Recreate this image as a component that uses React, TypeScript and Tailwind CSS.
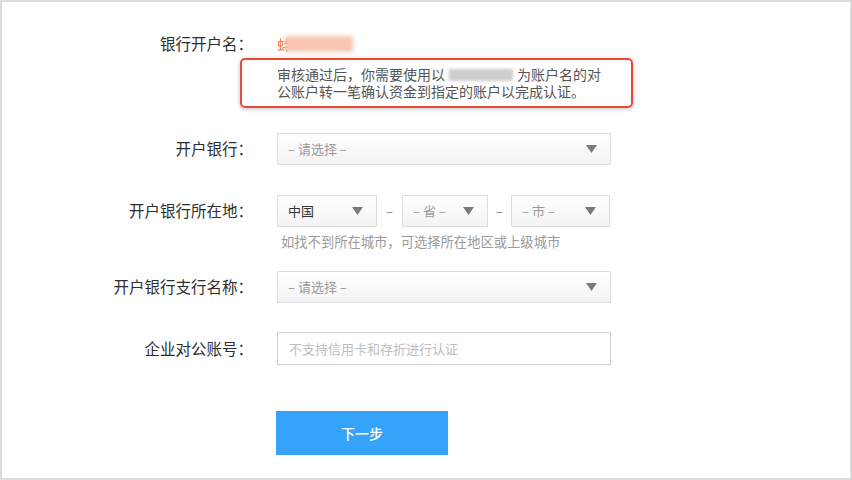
import React from 'react';

const font = { fontFamily: '"Noto Sans CJK SC", "Noto Sans", sans-serif' };

const Arrow = () => (
  <svg width="11" height="8" viewBox="0 0 11 8" className="shrink-0">
    <path d="M0 0 L11 0 L5.5 8 Z" fill="#7a7a7a" />
  </svg>
);

interface SelectProps {
  value: string;
  placeholder?: boolean;
  className?: string;
}

const FakeSelect: React.FC<SelectProps> = ({ value, placeholder, className }) => (
  <div
    className={`flex items-center justify-between h-[32px] pl-[10px] pr-[13px] border border-[#dedede] bg-gradient-to-b from-white to-[#f3f3f3] ${className ?? ''}`}
  >
    <span className={`text-[13px] ${placeholder ? 'text-[#9a9a9a]' : 'text-[#333]'}`}>{value}</span>
    <Arrow />
  </div>
);

const Label: React.FC<{ children: React.ReactNode }> = ({ children }) => (
  <div className="w-[251px] shrink-0 text-right text-[15.5px] text-[#2e2e2e]">{children}</div>
);

export default function App() {
  return (
    <div style={font} className="w-[852px] h-[480px] border-2 border-[#dcdcdc] bg-white overflow-hidden">
      {/* 银行开户名 */}
      <div className="flex items-center h-[20px] mt-[32px]">
        <Label>银行开户名：</Label>
        <div className="ml-[24px] flex items-center">
          <span className="text-[14px] text-[#f07a4a] blur-[0.6px]">蚌</span>
          <span className="inline-block w-[68px] h-[16px] -ml-[6px] bg-[#f8c6b2] blur-[2px]" />
        </div>
      </div>

      {/* 提示框 */}
      <div className="ml-[238px] mt-[4px] w-[393px] h-[50px] border-2 border-[#e84a3a] rounded-[5px] shadow-[0_1px_4px_rgba(0,0,0,0.25)] pl-[35px] pt-[6px] text-[14px] leading-[17px] text-[#555]">
        <div className="flex items-center whitespace-nowrap">
          审核通过后，你需要使用以
          <span className="inline-block w-[64px] h-[12px] mx-[4px] bg-[#cdcdcd] blur-[1.5px]" />
          为账户名的对
        </div>
        <div className="whitespace-nowrap">公账户转一笔确认资金到指定的账户以完成认证。</div>
      </div>

      {/* 开户银行 */}
      <div className="flex items-center mt-[25px]">
        <Label>开户银行：</Label>
        <FakeSelect value="– 请选择 –" placeholder className="ml-[24px] w-[334px]" />
      </div>

      {/* 开户银行所在地 */}
      <div className="flex items-center mt-[30px]">
        <Label>开户银行所在地：</Label>
        <div className="ml-[24px] flex items-center">
          <FakeSelect value="中国" className="w-[100px]" />
          <span className="w-[25px] text-center text-[13px] text-[#888]">–</span>
          <FakeSelect value="– 省 –" placeholder className="w-[86px]" />
          <span className="w-[23px] text-center text-[13px] text-[#888]">–</span>
          <FakeSelect value="– 市 –" placeholder className="w-[99px]" />
        </div>
      </div>
      <div className="ml-[279px] mt-[7px] text-[13.3px] leading-[16px] text-[#9a9a9a]">
        如找不到所在城市，可选择所在地区或上级城市
      </div>

      {/* 开户银行支行名称 */}
      <div className="flex items-center mt-[21px]">
        <Label>开户银行支行名称：</Label>
        <FakeSelect value="– 请选择 –" placeholder className="ml-[24px] w-[334px]" />
      </div>

      {/* 企业对公账号 */}
      <div className="flex items-center mt-[29px]">
        <Label>企业对公账号：</Label>
        <input
          className="ml-[24px] w-[334px] h-[33px] border border-[#cfcfcf] bg-white px-[11px] text-[13px] outline-none placeholder:text-[#bdbdbd]"
          placeholder="不支持信用卡和存折进行认证"
          style={font}
        />
      </div>

      <button
        className="block ml-[274px] mt-[46px] w-[172px] h-[44px] bg-[#36a3fb] text-white text-[14px] font-medium"
        style={font}
      >
        下一步
      </button>
    </div>
  );
}
